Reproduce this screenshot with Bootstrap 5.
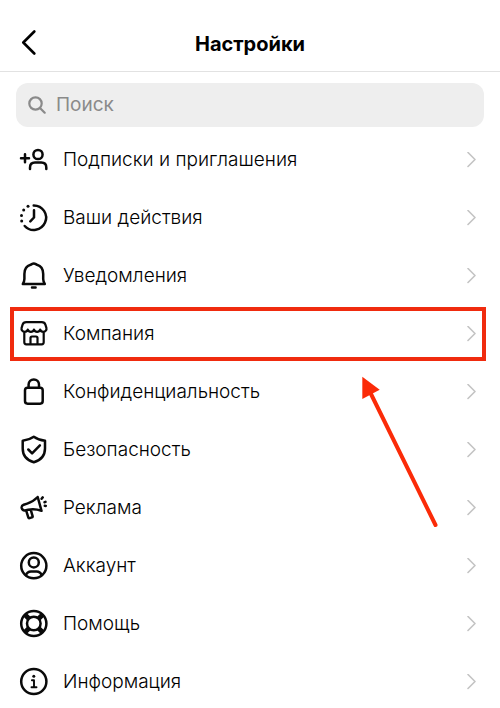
<!DOCTYPE html>
<html lang="ru">
<head>
<meta charset="utf-8">
<meta name="viewport" content="width=device-width, initial-scale=1">
<title>Настройки</title>
<link href="https://cdn.jsdelivr.net/npm/bootstrap@5.3.0/dist/css/bootstrap.min.css" rel="stylesheet">
<style>
body { font-family: Inter, Roboto, sans-serif; background: #fff; color: #111; }
svg { display: block; flex-shrink: 0; fill: none; stroke: currentColor; stroke-linecap: round; stroke-linejoin: round; }
.topbar { height: 72px; padding: 17px 16px 0; border-bottom: 1px solid #e2e2e2; }
.topbar h1 { font-size: 20px; line-height: 24px; font-weight: 700; color: #000; }
.side { width: 32px; }
.back { color: #000; }
.search { height: 44px; margin: 11px 16px 0; padding: 0 12px; gap: 10px; border-radius: 12px; background: #eee; color: #8a8a8a; }
.search input { color: #333; font-size: 19px; line-height: 24px; }
.search input::placeholder { color: #8a8a8a; opacity: 1; }
.menu { margin: 7px 15px 0 11px; gap: 6px; }
.entry { height: 52px; padding: 0 8px 0 7px; gap: 13px; font-size: 19px; line-height: 24px; font-weight: 300; color: #000; }
.entry > svg:first-child { stroke-width: 2.5; color: #0a0a0a; }
.chevron { color: #c4c4c4; stroke-width: 1.6; }
.marked { outline: 4px solid #f02b0e; outline-offset: -3px; }
.pointer { top: 68px; right: 45px; color: #fb2b08; pointer-events: none; }
</style>
</head>
<body>
<header class="topbar d-flex align-items-center justify-content-between">
  <div class="side">
    <button type="button" class="back btn p-0 border-0" aria-label="Назад"><svg width="24" height="28" viewBox="0 0 24 28" stroke-width="2.6"><path d="M18.300 1.500 7.300 12.500 18.300 23.500"/></svg></button>
  </div>
  <h1 class="m-0">Настройки</h1>
  <div class="side"></div>
</header>
<main>
  <label class="search d-flex align-items-center">
    <svg width="18" height="18" viewBox="0 0 18 18" stroke-width="2.200"><circle cx="7.500" cy="7.500" r="6.200"/><path d="m12.200 12.200 4.500 4.500"/></svg>
    <input type="search" class="form-control p-0 border-0 bg-transparent shadow-none" placeholder="Поиск" aria-label="Поиск">
  </label>
  <ul class="menu list-unstyled d-flex flex-column mb-0">
    <li><a href="#" class="entry d-flex align-items-center text-decoration-none">
      <svg width="32" height="32" viewBox="0 0 32 32"><path d="M3 14.300h8M7 10.300v8M12 25v-1.500q0-5 5-5h6.300q5 0 5 5V25"/><circle cx="20" cy="10.500" r="4.600"/></svg>
      <span class="flex-grow-1">Подписки и приглашения</span>
      <svg class="chevron" width="10" height="16" viewBox="0 0 10 16"><path d="m1 .5 7 7-7 7"/></svg></a></li>
    <li><a href="#" class="entry d-flex align-items-center text-decoration-none">
      <svg width="32" height="32" viewBox="0 0 32 32"><path d="M15.700 3.400A12.300 12.300 0 1 1 6.700 24M16 8.300v7.200L12.300 19.300"/><g fill="currentColor" stroke="none"><circle cx="10" cy="4.200" r="1.500"/><circle cx="5.700" cy="7.900" r="1.500"/><circle cx="3.500" cy="13.400" r="1.500"/><circle cx="3.700" cy="19" r="1.500"/></g></svg>
      <span class="flex-grow-1">Ваши действия</span>
      <svg class="chevron" width="10" height="16" viewBox="0 0 10 16"><path d="m1 .5 7 7-7 7"/></svg></a></li>
    <li><a href="#" class="entry d-flex align-items-center text-decoration-none">
      <svg width="32" height="32" viewBox="0 0 32 32"><path d="M4.800 24h22q-1.500-2-1.600-5v-5c0-5-2.200-8.200-6.200-9.300-1.200-.4-1.800-1.200-3.200-1.200s-2 .8-3.200 1.200C8.600 5.800 6.400 9 6.400 14v5q-.1 3-1.600 5ZM14 27.600h3.600"/></svg>
      <span class="flex-grow-1">Уведомления</span>
      <svg class="chevron" width="10" height="16" viewBox="0 0 10 16"><path d="m1 .5 7 7-7 7"/></svg></a></li>
    <li class="position-relative"><a href="#" class="entry marked d-flex align-items-center text-decoration-none">
      <svg width="32" height="32" viewBox="0 0 32 32"><path stroke-width="2.200" d="M8.200 4.200h15.600q2.800 0 3.600 2.400l1 3.200c.5 2.200-1 4-3.100 4-1.600 0-2.700-.8-3.100-2.200-.5 1.400-1.600 2.200-3.100 2.200S16.500 13 16 11.600c-.5 1.400-1.600 2.200-3.100 2.200s-2.600-.8-3.100-2.200c-.5 1.400-1.500 2.200-3.100 2.200-2.100 0-3.600-1.800-3.100-4l1-3.200q.8-2.400 3.600-2.400ZM6.300 14v10.300q0 2 2 2h15.400q2 0 2-2V14M12.500 26v-6q0-1.500 1.500-1.500h4q1.500 0 1.500 1.500v6"/></svg>
      <span class="flex-grow-1">Компания</span>
      <svg class="chevron" width="10" height="16" viewBox="0 0 10 16"><path d="m1 .5 7 7-7 7"/></svg></a>
      <svg class="pointer position-absolute z-1" width="80" height="152" viewBox="0 0 80 152" aria-hidden="true"><path d="M11 18 75.500 149" stroke-width="4"/><path d="M2.300.7 19.700 13.700 2.300 23Z" fill="currentColor" stroke="none"/></svg></li>
    <li><a href="#" class="entry d-flex align-items-center text-decoration-none">
      <svg width="32" height="32" viewBox="0 0 32 32"><rect x="7" y="11.700" width="17.700" height="16" rx="2.600"/><path d="M10.600 11.500V8.600a5.200 5.200 0 0 1 10.400 0v2.900"/></svg>
      <span class="flex-grow-1">Конфиденциальность</span>
      <svg class="chevron" width="10" height="16" viewBox="0 0 10 16"><path d="m1 .5 7 7-7 7"/></svg></a></li>
    <li><a href="#" class="entry d-flex align-items-center text-decoration-none">
      <svg width="32" height="32" viewBox="0 0 32 32"><path d="M15.800 2.800c3 2.200 7 3.500 11.200 4v7.700c0 7-4 11.600-11.200 13.700C8.600 26.100 4.700 21.500 4.700 14.500V6.800c4.100-.5 8-1.800 11.100-4ZM10.300 15.500l3.800 3.800 7.800-7.900"/></svg>
      <span class="flex-grow-1">Безопасность</span>
      <svg class="chevron" width="10" height="16" viewBox="0 0 10 16"><path d="m1 .5 7 7-7 7"/></svg></a></li>
    <li><a href="#" class="entry d-flex align-items-center text-decoration-none">
      <svg width="32" height="32" viewBox="0 0 32 32"><path d="M19.700 5q-4.600 4.800-10.500 6.600L5.700 12.700q-2.400 1-2 3.300.7 2.700 3.300 2.400l3.200-.6q6.400-1.300 13.300 1ZM8.300 19l2 6.400q.3 1 1.300.7l2.300-.7q1-.3.700-1.300l-1.700-5.800M23.600 6.700l1.100-1.300M26.500 10.200l1-.3M26.800 13.800l1 .1"/></svg>
      <span class="flex-grow-1">Реклама</span>
      <svg class="chevron" width="10" height="16" viewBox="0 0 10 16"><path d="m1 .5 7 7-7 7"/></svg></a></li>
    <li><a href="#" class="entry d-flex align-items-center text-decoration-none">
      <svg width="32" height="32" viewBox="0 0 32 32"><circle cx="15.800" cy="15.700" r="12.600"/><circle cx="15.800" cy="12.400" r="5"/><path d="M8 25.200q1.200-3.700 5-3.700h5.600q3.800 0 5 3.700"/></svg>
      <span class="flex-grow-1">Аккаунт</span>
      <svg class="chevron" width="10" height="16" viewBox="0 0 10 16"><path d="m1 .5 7 7-7 7"/></svg></a></li>
    <li><a href="#" class="entry d-flex align-items-center text-decoration-none">
      <svg width="32" height="32" viewBox="0 0 32 32"><circle cx="15.800" cy="15.500" r="12.600"/><circle cx="15.800" cy="15.500" r="6.800"/><path stroke-width="4.800" stroke-linecap="butt" d="m7 6.700 4.300 4.300M24.600 6.700l-4.300 4.300M7 24.300l4.300-4.300M24.600 24.300l-4.300-4.300"/></svg>
      <span class="flex-grow-1">Помощь</span>
      <svg class="chevron" width="10" height="16" viewBox="0 0 10 16"><path d="m1 .5 7 7-7 7"/></svg></a></li>
    <li><a href="#" class="entry d-flex align-items-center text-decoration-none">
      <svg width="32" height="32" viewBox="0 0 32 32"><circle cx="15.800" cy="15.500" r="12.600"/><path stroke-width="1.900" d="M13.900 14.300H16V21M13.500 21.200h5"/><circle cx="15.800" cy="10.300" r="1.500" fill="currentColor" stroke="none"/></svg>
      <span class="flex-grow-1">Информация</span>
      <svg class="chevron" width="10" height="16" viewBox="0 0 10 16"><path d="m1 .5 7 7-7 7"/></svg></a></li>
  </ul>
</main>
<script src="https://cdn.jsdelivr.net/npm/bootstrap@5.3.0/dist/js/bootstrap.bundle.min.js"></script>
</body>
</html>
